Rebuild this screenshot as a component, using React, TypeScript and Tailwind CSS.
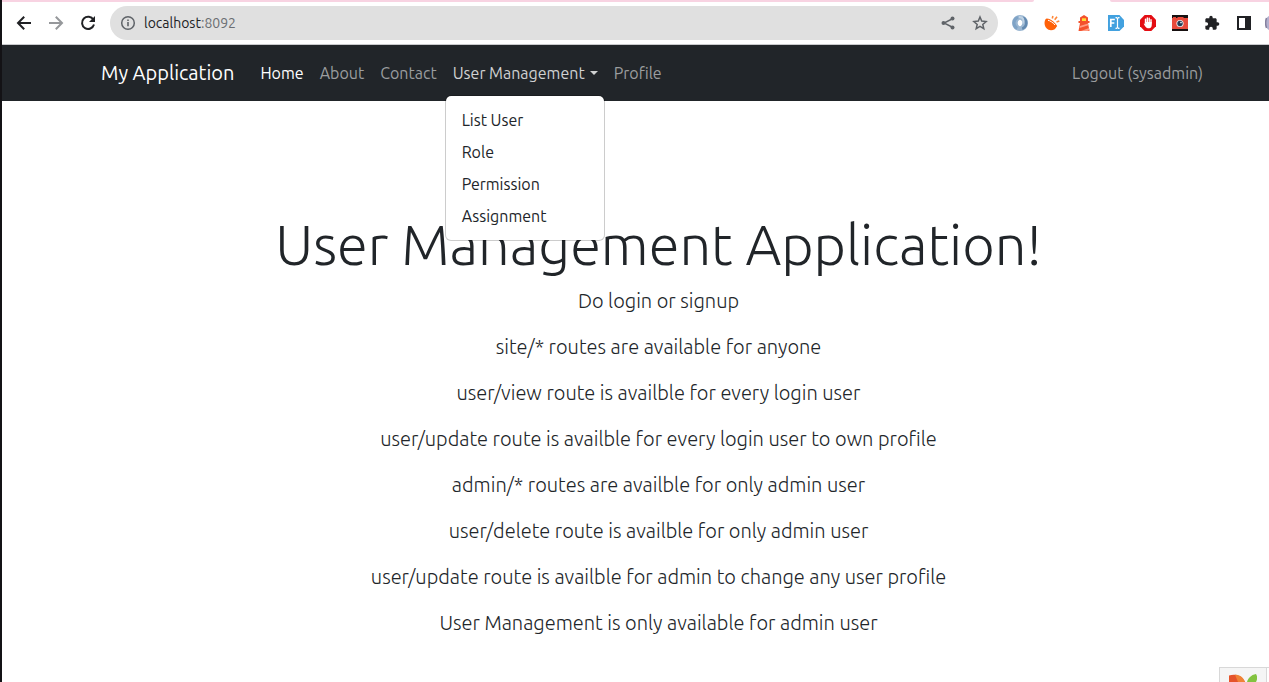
import React from "react";

const routes = [
  "Do login or signup",
  "site/* routes are available for anyone",
  "user/view route is availble for every login user",
  "user/update route is availble for every login user to own profile",
  "admin/* routes are availble for only admin user",
  "user/delete route is availble for only admin user",
  "user/update route is availble for admin to change any user profile",
  "User Management is only available for admin user",
];

const menuItems = ["List User", "Role", "Permission", "Assignment"];

function IconButton({ label, children }: { label: string; children: React.ReactNode }) {
  return (
    <button type="button" aria-label={label} className="flex size-4 shrink-0 items-center justify-center">
      {children}
    </button>
  );
}

function BrowserBar() {
  return (
    <header className="shrink-0 border-b border-[#c9cacd] bg-white">
      <div className="flex h-[2px]">
        <div className="w-[1032px] rounded-br-md bg-[#f8d3e2]" />
        <div className="ml-[76px] flex-1 rounded-bl-md bg-[#f8d3e2]" />
      </div>
      <div className="flex h-[42px] items-center pl-3.5">
        <div className="flex gap-4">
          <IconButton label="Back">
            <svg width="16" height="16" viewBox="0 0 16 16" fill="none" stroke="#202124" strokeWidth="2">
              <path d="M15 8H2.500M8.200 1.700 2 8l6.200 6.300" />
            </svg>
          </IconButton>
          <IconButton label="Forward">
            <svg width="16" height="16" viewBox="0 0 16 16" fill="none" stroke="#96989b" strokeWidth="2">
              <path d="M1 8h12.500M7.800 1.700 14 8l-6.200 6.300" />
            </svg>
          </IconButton>
          <IconButton label="Reload">
            <svg width="16" height="16" viewBox="0 0 16 16">
              <path d="M13.400 4.700A6.100 6.100 0 1 0 14 9.500" fill="none" stroke="#202124" strokeWidth="2" />
              <path d="M15 1v6H9z" fill="#202124" />
            </svg>
          </IconButton>
        </div>
        <div className="ml-3.5 flex h-[34px] min-w-0 flex-1 items-center rounded-full bg-[#e0e0e0] px-2.5">
          <svg className="shrink-0" width="16" height="16" viewBox="0 0 16 16" fill="none" stroke="#5f6368">
            <circle cx="8" cy="8" r="6.300" strokeWidth="1.500" />
            <path d="M8 7v4.300M8 4.400v1.700" strokeWidth="1.600" />
          </svg>
          <div className="ml-2 flex-1 text-sm text-[#202124]">
            localhost<span className="text-[#6b6e72]">:8092</span>
          </div>
          <div className="flex gap-4">
            <IconButton label="Share">
              <svg width="16" height="16" viewBox="0 0 16 16" fill="#5f6368">
                <path d="M13 3.500 4 8l9 4.500" fill="none" stroke="#5f6368" strokeWidth="1.400" />
                <circle cx="12.500" cy="3.500" r="2" />
                <circle cx="3.500" cy="8" r="2" />
                <circle cx="12.500" cy="12.500" r="2" />
              </svg>
            </IconButton>
            <IconButton label="Bookmark this page">
              <svg width="16" height="16" viewBox="0 0 16 16" fill="none" stroke="#5f6368" strokeWidth="1.500">
                <path d="m8 2 1.700 4.100 4.400.4-3.300 2.900 1 4.300L8 11.400l-3.800 2.300 1-4.300-3.300-2.900 4.400-.4z" />
              </svg>
            </IconButton>
          </div>
        </div>
        <div className="flex w-[271px] shrink-0 gap-4 overflow-hidden pl-3.5">
          <IconButton label="Ring extension">
            <svg width="16" height="16" viewBox="0 0 16 16" fill="none">
              <circle cx="8" cy="8" r="5.200" stroke="#9bb7d2" strokeWidth="5.600" />
              <path d="M5.200 13.300A6 6 0 0 1 6 2.300" stroke="#7fa3c6" strokeWidth="3" />
              <path d="M11 2.700a6 6 0 0 1-.8 11" stroke="#6389b0" strokeWidth="2.500" />
              <path d="M7 2c4.500 0 5.500 3.500 3.500 6.500" stroke="#bfd2e4" strokeWidth="2" />
              <ellipse cx="8" cy="8" rx="1.800" ry="3.300" fill="#fff" />
            </svg>
          </IconButton>
          <IconButton label="Plug extension">
            <svg width="16" height="16" viewBox="0 0 16 16" fill="none">
              <path d="M2.200 3.500C-.7 6.500.2 12.500 4.500 14.800c3.500 1.300 7.500-.3 8.300-3.800z" fill="#ff6108" />
              <path d="M2.300 4.300c2-1.300 9 3 10.200 6.900-3.400.8-8.900-2.800-10.200-6.900z" fill="#ff6108" stroke="#ff6108" />
              <path d="M4 5.300c1.600.1 5.400 2.500 7 4.700" stroke="#fff" strokeWidth="1" />
              <path d="M8.300 3.500 8.900 1M10.700 4.800l2.300-3M12.500 7l2.800-1" stroke="#ff8738" strokeWidth="1.600" />
            </svg>
          </IconButton>
          <IconButton label="Lighthouse">
            <svg width="16" height="16" viewBox="0 0 16 16">
              <path d="M8 0 4 2.500V6H2.500v2H4l-1.500 8h11L12 8h1.500V6H12V2.500z" fill="#f4512c" />
              <path d="M6 3.300h4V6H6z" fill="#ffdf35" />
              <path d="m4 11 8-2.500.3 1.800L3.500 13zM5 16l8-3 .5 2-2 1z" fill="#ff9c83" />
            </svg>
          </IconButton>
          <IconButton label="Font finder">
            <svg width="16" height="16" viewBox="0 0 16 16" fill="none" stroke="#fff">
              <path d="M0 0h11.500L16 5v6.500L11.500 16H0z" fill="#42a1df" stroke="none" />
              <path d="M2.800 12V4.500h4M2.800 8h3.500" strokeWidth="1.700" />
              <path d="M7.500 2.700h1l1 1 1-1h1M7.500 13.300h1l1-1 1 1h1M9.500 3.700v8.600" strokeWidth="1.200" />
            </svg>
          </IconButton>
          <IconButton label="Ad blocker">
            <svg width="16" height="16" viewBox="0 0 16 16">
              <path d="M4.700 0h6.600L16 4.700v6.600L11.300 16H4.700L0 11.300V4.700z" fill="#e40d13" />
              <path d="M5.500 8V4.300M7.300 7V2.900M9.200 7V3.200M11 8V4.800" stroke="#fff" strokeWidth="1.400" strokeLinecap="round" />
              <path d="M4.800 7h7v2.500c0 2.500-1 3.800-2.500 3.800H8c-1.500 0-2.500-1-4.300-4.500.7-.8 1.200-.3 1.800.5z" fill="#fff" />
            </svg>
          </IconButton>
          <IconButton label="Screenshot">
            <svg width="16" height="16" viewBox="0 0 16 16">
              <path d="M0 0h16v16H0z" fill="#171010" />
              <path d="M0 3h1V2h3v1h1l1-1h5l1 1h4v11H0z" fill="#e84a3b" />
              <circle cx="8" cy="8.500" r="3.600" fill="#eee" />
              <circle cx="8" cy="8.500" r="2.700" fill="#233c55" />
              <circle cx="9" cy="7.600" r=".8" fill="#fff" />
            </svg>
          </IconButton>
          <IconButton label="Extensions">
            <svg width="16" height="16" viewBox="0 0 24 24" fill="#202124">
              <path d="M20.500 11H19V7c0-1.100-.9-2-2-2h-4V3.500a2.500 2.500 0 0 0-5 0V5H4c-1.100 0-1.990.9-1.990 2v3.800H3.500a2.700 2.700 0 0 1 0 5.400H2V20c0 1.100.9 2 2 2h3.800v-1.500a2.700 2.700 0 0 1 5.400 0V22H17c1.100 0 2-.9 2-2v-4h1.500a2.500 2.500 0 0 0 0-5z" />
            </svg>
          </IconButton>
          <IconButton label="Side panel">
            <svg width="16" height="16" viewBox="0 0 16 16" fill="#202124">
              <path d="M1 1h14v14H1zm2 2v10h6V3z" fillRule="evenodd" />
            </svg>
          </IconButton>
          <button type="button" aria-label="Account" className="-ml-[3px] size-4 shrink-0">
            <svg width="16" height="16" viewBox="0 0 16 16">
              <circle cx="8" cy="8" r="8" fill="#b3b0ce" />
              <path d="M1.500 3c-1 3-1 7 0 10" fill="none" stroke="#85809e" strokeWidth="1.500" />
            </svg>
          </button>
        </div>
      </div>
    </header>
  );
}

function NavBar() {
  return (
    <nav className="flex h-14 shrink-0 items-center bg-[#212529] pr-[66px] pl-[99px] text-base text-[#9b9d9f]">
      <a href="#" className="mr-[18px] text-xl leading-[30px] text-white">My Application</a>
      <a href="#" className="px-2 text-white">Home</a>
      <a href="#" className="px-2">About</a>
      <a href="#" className="px-2">Contact</a>
      <div className="relative">
        <button type="button" aria-expanded="true" className="flex items-center gap-[5px] px-2 py-2 text-[#d0d1d2]">
          User Management
          <svg width="8" height="4" viewBox="0 0 8 4" fill="currentColor">
            <path d="M0 0h8L4 4z" />
          </svg>
        </button>
        <ul className="absolute top-full left-0 z-10 mt-0.5 w-40 rounded-md border border-black/20 bg-white bg-clip-padding py-2">
          {menuItems.map((item) => (
            <li key={item}>
              <a href="#" className="block px-4 py-1 text-[#212529]">{item}</a>
            </li>
          ))}
        </ul>
      </div>
      <a href="#" className="px-2">Profile</a>
      <button type="button" className="ml-auto">Logout (sysadmin)</button>
    </nav>
  );
}

export default function App() {
  return (
    <div className="flex min-h-screen flex-col border-l-2 border-[#131215] bg-white font-['Ubuntu','Noto_Sans',sans-serif] text-[#212529]">
      <BrowserBar />
      <NavBar />
      <main className="flex-1 pt-[110px] pl-[46px] text-center font-light">
        <h1 className="mb-2 text-[56px] leading-[67px]">User Management Application!</h1>
        {routes.map((route) => (
          <p key={route} className="mb-4 text-xl leading-[30px]">{route}</p>
        ))}
      </main>
      <button
        type="button"
        aria-label="Open debugger"
        className="fixed right-0 bottom-0 flex h-[15px] w-[50px] items-start overflow-hidden border-t border-l border-[#d8d8d8] bg-white"
      >
        <span className="flex h-full w-[47px] justify-center border-r border-[#d8d8d8] bg-[#f5f5f5] pt-1.5">
          <svg width="28" height="8" viewBox="0 0 28 8">
            <path d="M0 1.500C6-.5 13 1 16 8H0z" fill="#e5532b" />
            <path d="M6 .8c5 0 8 2.200 10 7.200H9z" fill="#f08336" />
            <path d="M27 0c2 3 1 6 0 8h-9c1-4 4-7 9-8z" fill="#83c340" />
          </svg>
        </span>
      </button>
    </div>
  );
}
